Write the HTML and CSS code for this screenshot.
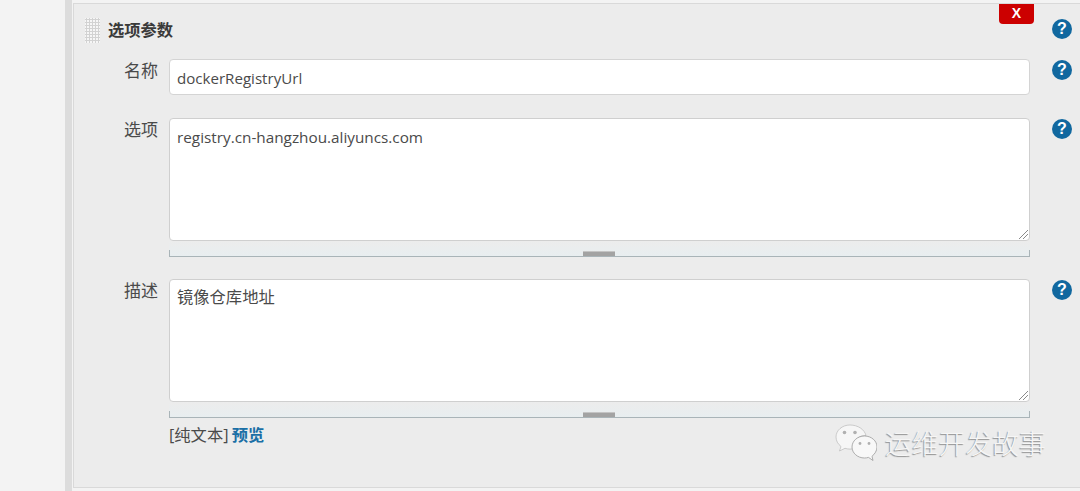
FILE: index.html
```html
<!DOCTYPE html>
<html lang="zh">
<head>
<meta charset="utf-8">
<title>选项参数</title>
<link rel="stylesheet" href="styles.css">
</head>
<body>
<div class="page">
  <aside class="side"></aside>
  <main class="panel">
    <header class="head">
      <span class="grip"></span>
      <h2 class="title">选项参数</h2>
      <button class="close" type="button">X</button>
      <span class="help head-help">?</span>
    </header>
    <div class="row row-name">
      <label class="lbl">名称</label>
      <div class="input">dockerRegistryUrl</div>
      <span class="help">?</span>
    </div>
    <div class="row row-opt">
      <label class="lbl">选项</label>
      <div class="field">
        <div class="area">registry.cn-hangzhou.aliyuncs.com<svg class="rz" viewBox="0 0 10 10"><path d="M1 10 10 1M5 10 10 5" /></svg></div>
        <div class="drag"><span class="handle"></span></div>
      </div>
      <span class="help">?</span>
    </div>
    <div class="row row-desc">
      <label class="lbl">描述</label>
      <div class="field">
        <div class="area area-cjk">镜像仓库地址<svg class="rz" viewBox="0 0 10 10"><path d="M1 10 10 1M5 10 10 5" /></svg></div>
        <div class="drag"><span class="handle"></span></div>
        <div class="links">[纯文本] <a class="preview">预览</a></div>
      </div>
      <span class="help">?</span>
    </div>
    <div class="mark">
      <svg class="wechat" viewBox="0 0 42 38">
        <path class="b1" d="M15 1C7 1 1 6.500 1 13c0 4 2 7 5 9.500L4.500 27l5.500-2.700c1.600.5 3.300.8 5 .8 1 0 2-.1 3-.2C17 17 24 11 31 11.500 29.500 5.500 23 1 15 1Z"/>
        <path class="b2" d="M29.500 12C22.500 12 17 17 17 23s5.500 11 12.500 11c1.400 0 2.800-.2 4-.6l4.500 3.100-1-4.200C39.500 30.200 42 27 42 23c0-6-5.500-11-12.500-11Z"/>
        <circle class="eye" cx="9.500" cy="8.500" r="1.800"/><circle class="eye" cx="20" cy="8.500" r="1.800"/>
        <circle class="eye" cx="25" cy="19.500" r="1.400"/><circle class="eye" cx="34" cy="19.500" r="1.400"/>
      </svg>
      <span class="mark-text">运维开发故事</span>
    </div>
  </main>
</div>
</body>
</html>
```
FILE: styles.css
```css
* { box-sizing: border-box; }
html, body { margin: 0; height: 100%; overflow: hidden; }
body {
  background: #f3f3f3;
  color: #4a4a4a;
  font-family: "Open Sans", "Noto Sans CJK SC", sans-serif;
  font-size: 15.3px;
}
.page { display: flex; height: 491px; }
.side {
  width: 72px;
  flex: none;
  background: #f3f3f3;
  border-right: 7px solid #dcdcdc;
}
.panel {
  position: relative;
  flex: 1;
  margin: 3px 0 0 1px;
  height: 485px;
  background: #ececec;
  border-top: 1px solid #d9d9d9;
  border-left: 1px solid #d9d9d9;
  border-bottom: 1px solid #d9d9d9;
  padding-left: 11px;
}
.head { display: flex; align-items: flex-start; height: 55px; position: relative; }
.grip {
  width: 15px;
  height: 25px;
  margin-top: 14px;
  background-color: #f6f6f6;
  background-image: radial-gradient(circle at 1.500px 1.500px, #d2d2d2 1px, transparent 1.100px);
  background-size: 3px 3px;
}
.title {
  margin: 15px 0 0 8px;
  font-size: 16.3px;
  font-weight: 700;
  line-height: 22px;
  color: #3a3a3a;
}
.close {
  position: absolute;
  left: 914px;
  top: 0;
  width: 35px;
  height: 20px;
  border: 0;
  padding: 0 0 2px;
  border-radius: 0 0 4px 4px;
  background: #cc0000;
  color: #fff;
  font: 700 14px "Liberation Sans", sans-serif;
}
.help {
  flex: none;
  width: 20px;
  height: 20px;
  border-radius: 50%;
  background: #11689f;
  color: #fff;
  font: 700 16px/20px "Liberation Sans", sans-serif;
  text-align: center;
}
.head-help { position: absolute; left: 967px; top: 15px; }
.row { display: flex; align-items: flex-start; }
.lbl {
  width: 73px;
  flex: none;
  padding-top: 1px;
  text-align: right;
  font-size: 17px;
  line-height: 22px;
  color: #4a4a4a;
  margin-right: 11px;
}
.row-name { height: 59px; }
.row-opt { height: 161px; }
.row-desc { height: 200px; }
.input {
  width: 861px;
  height: 36px;
  padding: 0 7px;
  font-size: 15.1px;
  line-height: 36px;
  background: #fff;
  border: 1px solid #d4d4d4;
  border-radius: 4px;
}
.field { width: 861px; flex: none; }
.area {
  position: relative;
  height: 123px;
  padding: 6px 7px;
  line-height: 24px;
  background: #fff;
  border: 1px solid #cfcfcf;
  border-radius: 4px;
}
.area-cjk { font-size: 16.3px; padding-top: 5px; }
.rz {
  position: absolute;
  right: 1px;
  bottom: 1px;
  width: 10px;
  height: 10px;
  stroke: #8a8a8a;
  stroke-width: 1;
  fill: none;
}
.drag {
  position: relative;
  height: 16px;
  background:
    linear-gradient(#a9b4b8, #a9b4b8) left bottom / 1px 6px no-repeat,
    linear-gradient(#a9b4b8, #a9b4b8) right bottom / 1px 6px no-repeat,
    linear-gradient(#ececec, #e8eef0);
  border-bottom: 1px solid #a9b4b8;
}
.handle {
  position: absolute;
  left: 414px;
  top: 10px;
  width: 32px;
  height: 5px;
  background: linear-gradient(#a3a3a3 40%, #d0d0d0 40%, #d0d0d0 60%, #a3a3a3 60%);
  border-top: 1px solid #c4c4c4;
}
.links { margin-top: 6px; font-size: 16.3px; line-height: 22px; word-spacing: -1px; }
.preview { color: #1a6fa6; font-weight: 700; }
.row .help { margin: 1px 0 0 22px; }
.mark {
  position: absolute;
  left: 761px;
  top: 420px;
  display: flex;
  align-items: center;
  gap: 8px;
}
.wechat { width: 42px; height: 38px; }
.b1 { fill: #f6f6f6; stroke: #b0b0b0; stroke-width: .6; }
.b2 { fill: #f8f8f8; stroke: #9a9a9a; stroke-width: .8; }
.eye { fill: #b0b0b0; }
.mark-text {
  font-size: 26.8px;
  line-height: 36px;
  color: #f6f6f6;
  font-family: "Noto Sans CJK SC", sans-serif;
  font-weight: 300;
  text-shadow: -1px 1px 1px #8f8f8f;
}
```
